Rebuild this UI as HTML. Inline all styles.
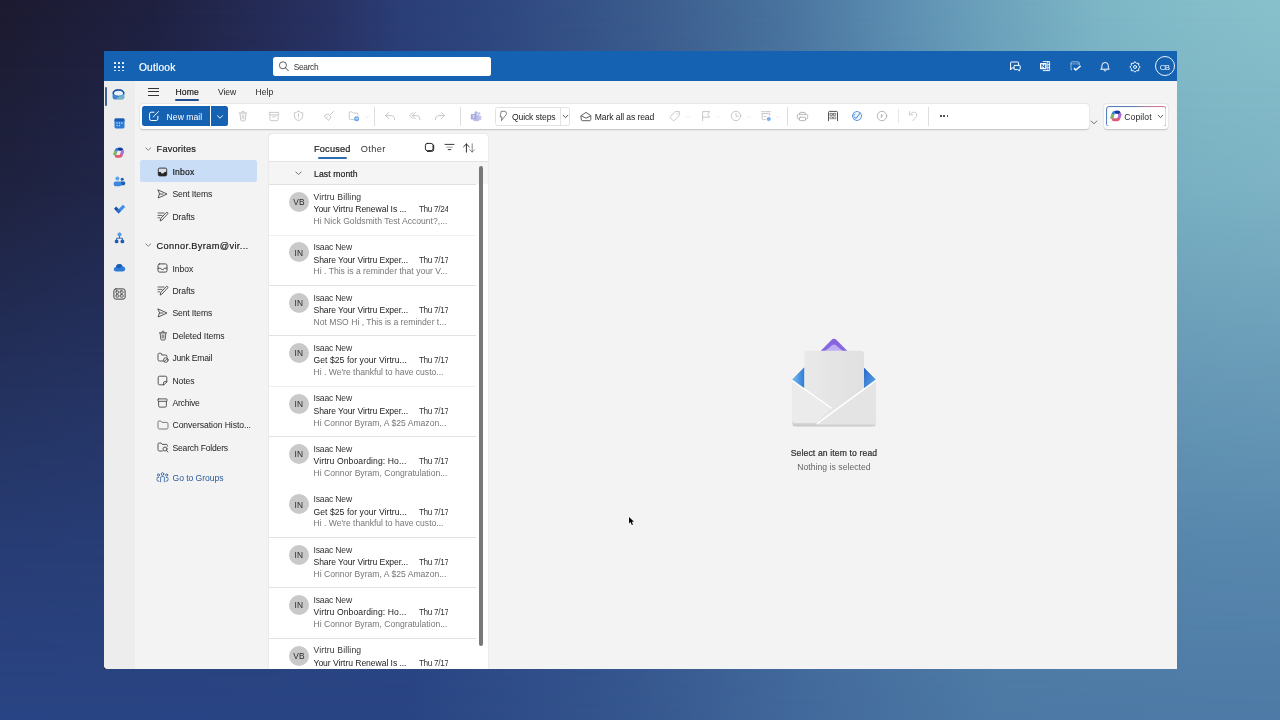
<!DOCTYPE html>
<html><head><meta charset="utf-8"><title>Outlook</title>
<style>
html,body{margin:0;padding:0;}
body{width:1280px;height:720px;overflow:hidden;position:relative;font-family:"Liberation Sans",sans-serif;background:#2a4580;}
.b{position:absolute;box-sizing:border-box;display:block;}
.t{position:absolute;white-space:nowrap;line-height:1;font-family:"Liberation Sans",sans-serif;}

#bg1{left:0;top:0;width:1280px;height:720px;background:linear-gradient(90deg,#2a4585 0%,#2a4584 32%,#34558e 48%,#42699b 62%,#4c79a5 78%,#4d7aa6 100%);}
#bg2{left:0;top:0;width:1280px;height:720px;background:linear-gradient(90deg,#1c1a2f 0%,#1f2040 12%,#283263 26%,#2b3d75 31%,#2e467e 38%,#3a5a8c 50%,#4a759f 62%,#5c8eb1 70%,#6ea4bc 78%,#7db6c6 86%,#85bec9 94%,#88c0cb 100%);-webkit-mask-image:linear-gradient(180deg,#000 0%,rgba(0,0,0,.82) 25%,rgba(0,0,0,.5) 50%,rgba(0,0,0,.2) 75%,rgba(0,0,0,0) 100%);mask-image:linear-gradient(180deg,#000 0%,rgba(0,0,0,.82) 25%,rgba(0,0,0,.5) 50%,rgba(0,0,0,.2) 75%,rgba(0,0,0,0) 100%);}
#win{left:104px;top:51px;width:1073px;height:617.5px;background:#f3f3f3;overflow:hidden;border-radius:0 0 0 4px;}

</style></head><body>
<div class="b" id="bg1"></div><div class="b" id="bg2"></div>
<div class="b" style="left:104px;top:662px;width:6px;height:6.5px;background:#15162a;"></div>
<div class="b" id="win">
<div class="b" style="left:-104px;top:-51px;width:1280px;height:720px;will-change:transform;">
<div class="b" style="left:104px;top:51px;width:1073px;height:30px;background:#1561b2;"></div>
<div class="b" style="left:114.2px;top:62.0px;width:1.7px;height:1.7px;background:#fff;border-radius:.4px;"></div>
<div class="b" style="left:114.2px;top:65.9px;width:1.7px;height:1.7px;background:#fff;border-radius:.4px;"></div>
<div class="b" style="left:114.2px;top:69.8px;width:1.7px;height:1.7px;background:#fff;border-radius:.4px;"></div>
<div class="b" style="left:118.10000000000001px;top:62.0px;width:1.7px;height:1.7px;background:#fff;border-radius:.4px;"></div>
<div class="b" style="left:118.10000000000001px;top:65.9px;width:1.7px;height:1.7px;background:#fff;border-radius:.4px;"></div>
<div class="b" style="left:118.10000000000001px;top:69.8px;width:1.7px;height:1.7px;background:#fff;border-radius:.4px;"></div>
<div class="b" style="left:122.0px;top:62.0px;width:1.7px;height:1.7px;background:#fff;border-radius:.4px;"></div>
<div class="b" style="left:122.0px;top:65.9px;width:1.7px;height:1.7px;background:#fff;border-radius:.4px;"></div>
<div class="b" style="left:122.0px;top:69.8px;width:1.7px;height:1.7px;background:#fff;border-radius:.4px;"></div>
<div class="t" style="left:139.00px;top:63px;font-size:10.2px;color:#fff;letter-spacing:0.192px;-webkit-text-stroke:0.2px #fff;">Outlook</div>
<div class="b" style="left:273px;top:57px;width:218px;height:19px;background:#fff;border-radius:2.5px;"></div>
<svg class="b" style="left:278px;top:60px;" width="12" height="12" viewBox="0 0 20 20"><circle cx="8.2" cy="8.8" r="5.9" fill="none" stroke="#3a3a3a" stroke-width="1.35"/><path d="M12.6 13.2 L17.4 18" stroke="#3a3a3a" stroke-width="1.5" stroke-linecap="round"/></svg>
<div class="t" style="left:293.80px;top:63px;font-size:8.4px;color:#333;letter-spacing:-0.353px;">Search</div>
<div class="b" style="left:104px;top:81px;width:1073px;height:23px;background:#f3f3f3;"></div>
<div class="b" style="left:104px;top:81px;width:30.5px;height:590px;background:#ededed;"></div>
<div class="b" style="left:105px;top:86.5px;width:2px;height:19px;background:#3e5f8f;border-radius:1px;"></div>
<div class="b" style="left:148px;top:88.0px;width:10.5px;height:1px;background:#333;"></div>
<div class="b" style="left:148px;top:91.4px;width:10.5px;height:1px;background:#333;"></div>
<div class="b" style="left:148px;top:94.8px;width:10.5px;height:1px;background:#333;"></div>
<div class="t" style="left:175.40px;top:88px;font-size:8.6px;color:#1b1b1b;letter-spacing:0.140px;-webkit-text-stroke:0.2px #1b1b1b;">Home</div>
<div class="b" style="left:175.4px;top:98.9px;width:23.5px;height:2px;background:#1f4e8f;border-radius:1px;"></div>
<div class="t" style="left:217.90px;top:88px;font-size:8.6px;color:#2a2a2a;letter-spacing:-0.071px;">View</div>
<div class="t" style="left:255.60px;top:88px;font-size:8.6px;color:#2a2a2a;letter-spacing:0.003px;">Help</div>
<div class="b" style="left:139.8px;top:104.2px;width:949px;height:24.8px;background:#fff;border-radius:3px;box-shadow:0 0.6px 1.6px rgba(0,0,0,.22);"></div>
<div class="b" style="left:142px;top:106px;width:67.7px;height:20px;background:#1561b2;border-radius:2.5px 0 0 2.5px;"></div>
<div class="b" style="left:211.3px;top:106px;width:16.8px;height:20px;background:#1561b2;border-radius:0 2.5px 2.5px 0;"></div>
<div class="t" style="left:166.60px;top:113px;font-size:8.6px;color:#fff;letter-spacing:0.030px;">New mail</div>
<div class="b" style="left:1104px;top:104.2px;width:63.8px;height:24.8px;background:#fff;border-radius:3px;box-shadow:0 0.6px 1.6px rgba(0,0,0,.22);"></div>
<div class="t" style="left:1124.20px;top:113px;font-size:8.6px;color:#2a2a2a;letter-spacing:0.118px;">Copilot</div>
<div class="t" style="left:511.90px;top:113px;font-size:8.6px;color:#1c1c1c;letter-spacing:-0.112px;">Quick steps</div>
<div class="t" style="left:594.80px;top:113px;font-size:8.6px;color:#1c1c1c;letter-spacing:-0.111px;">Mark all as read</div>
<div class="b" style="left:494.7px;top:106.7px;width:75.4px;height:18.9px;border:0.8px solid #e2e2e2;border-radius:2.5px;"></div>
<div class="b" style="left:560.1px;top:106.7px;width:0.8px;height:18.9px;background:#e2e2e2;"></div>
<div class="b" style="left:373.90000000000003px;top:107px;width:0.9px;height:18.8px;background:#dedede;"></div>
<div class="b" style="left:460.1px;top:107px;width:0.9px;height:18.8px;background:#dedede;"></div>
<div class="b" style="left:787.0px;top:107px;width:0.9px;height:18.8px;background:#dedede;"></div>
<div class="b" style="left:928.0px;top:107px;width:0.9px;height:18.8px;background:#dedede;"></div>
<div class="b" style="left:897.8px;top:109px;width:0.8px;height:14px;background:#e6e6e6;"></div>
<div class="t" style="left:156.60px;top:145px;font-size:9.2px;color:#222;letter-spacing:0.196px;-webkit-text-stroke:0.2px #222;">Favorites</div>
<div class="b" style="left:140.2px;top:160.1px;width:116.8px;height:21.9px;background:#c9def6;border-radius:2.5px;"></div>
<div class="t" style="left:172.50px;top:168px;font-size:8.6px;color:#1a1a1a;letter-spacing:0.192px;-webkit-text-stroke:0.2px #1a1a1a;">Inbox</div>
<div class="t" style="left:172.50px;top:190px;font-size:8.6px;color:#232323;letter-spacing:-0.151px;">Sent Items</div>
<div class="t" style="left:172.50px;top:213px;font-size:8.6px;color:#232323;letter-spacing:-0.123px;">Drafts</div>
<div class="t" style="left:156.60px;top:242px;font-size:9.2px;color:#222;letter-spacing:0.368px;-webkit-text-stroke:0.2px #222;">Connor.Byram@vir...</div>
<div class="t" style="left:172.50px;top:265px;font-size:8.6px;color:#232323;letter-spacing:-0.048px;">Inbox</div>
<div class="t" style="left:172.50px;top:287px;font-size:8.6px;color:#232323;letter-spacing:-0.123px;">Drafts</div>
<div class="t" style="left:172.50px;top:309px;font-size:8.6px;color:#232323;letter-spacing:-0.151px;">Sent Items</div>
<div class="t" style="left:172.50px;top:332px;font-size:8.6px;color:#232323;letter-spacing:-0.081px;">Deleted Items</div>
<div class="t" style="left:172.50px;top:354px;font-size:8.6px;color:#232323;letter-spacing:-0.246px;">Junk Email</div>
<div class="t" style="left:172.50px;top:377px;font-size:8.6px;color:#232323;letter-spacing:-0.093px;">Notes</div>
<div class="t" style="left:172.50px;top:399px;font-size:8.6px;color:#232323;letter-spacing:-0.240px;">Archive</div>
<div class="t" style="left:172.50px;top:421px;font-size:8.6px;color:#232323;letter-spacing:-0.063px;">Conversation Histo...</div>
<div class="t" style="left:172.50px;top:444px;font-size:8.6px;color:#232323;letter-spacing:-0.201px;">Search Folders</div>
<div class="t" style="left:172.50px;top:474px;font-size:8.6px;color:#2a5a9a;letter-spacing:-0.052px;">Go to Groups</div>
<div class="b" style="left:268.5px;top:134px;width:219px;height:540px;background:#fff;border-radius:3.5px 3.5px 0 0;box-shadow:0 0 1.5px rgba(0,0,0,.18);"></div>
<div class="t" style="left:314.00px;top:145px;font-size:9.2px;color:#222;letter-spacing:0.188px;-webkit-text-stroke:0.2px #222;">Focused</div>
<div class="b" style="left:317.5px;top:156.9px;width:29.5px;height:1.8px;background:#2d6cb5;border-radius:1px;"></div>
<div class="t" style="left:360.70px;top:145px;font-size:9.2px;color:#333;letter-spacing:0.398px;">Other</div>
<div class="b" style="left:268.5px;top:161px;width:219px;height:0.9px;background:#e3e3e3;"></div>
<div class="b" style="left:268.5px;top:161.9px;width:219px;height:22.4px;background:#f5f5f5;"></div>
<div class="b" style="left:269px;top:184.2px;width:207px;height:0.8px;background:#e0e0e0;"></div>
<div class="t" style="left:314.00px;top:170px;font-size:8.6px;color:#222;letter-spacing:0.125px;-webkit-text-stroke:0.2px #222;">Last month</div>
<div class="b" style="left:479.3px;top:166px;width:3.5px;height:480px;background:#787878;border-radius:2px;"></div>
<div class="b" style="left:0;top:0;width:447.8px;height:720px;overflow:hidden;">
<div class="b" style="left:289px;top:192.0px;width:20px;height:20px;background:#c9c9c9;border-radius:50%;"></div>
<div class="t" style="left:293.20px;top:198px;font-size:8.4px;color:#2a2a2a;letter-spacing:0.197px;">VB</div>
<div class="t" style="left:313.50px;top:193px;font-size:8.6px;color:#333;letter-spacing:0.148px;">Virtru Billing</div>
<div class="t" style="left:313.50px;top:205px;font-size:8.6px;color:#222;letter-spacing:-0.063px;">Your Virtru Renewal Is ...</div>
<div class="t" style="left:418.90px;top:206px;font-size:8.2px;color:#333;letter-spacing:-0.296px;">Thu 7/24</div>
<div class="t" style="left:313.50px;top:217px;font-size:8.6px;color:#777;letter-spacing:0.009px;">Hi Nick Goldsmith Test Account?,...</div>
<div class="b" style="left:289px;top:242.4px;width:20px;height:20px;background:#c9c9c9;border-radius:50%;"></div>
<div class="t" style="left:294.40px;top:249px;font-size:8.4px;color:#2a2a2a;letter-spacing:0.400px;">IN</div>
<div class="t" style="left:313.50px;top:243px;font-size:8.6px;color:#333;letter-spacing:-0.183px;">Isaac New</div>
<div class="t" style="left:313.50px;top:256px;font-size:8.6px;color:#222;letter-spacing:-0.092px;">Share Your Virtru Exper...</div>
<div class="t" style="left:418.90px;top:257px;font-size:8.2px;color:#333;letter-spacing:-0.296px;">Thu 7/17</div>
<div class="t" style="left:313.50px;top:267px;font-size:8.6px;color:#777;letter-spacing:0.004px;">Hi . This is a reminder that your V...</div>
<div class="b" style="left:289px;top:292.8px;width:20px;height:20px;background:#c9c9c9;border-radius:50%;"></div>
<div class="t" style="left:294.40px;top:299px;font-size:8.4px;color:#2a2a2a;letter-spacing:0.400px;">IN</div>
<div class="t" style="left:313.50px;top:294px;font-size:8.6px;color:#333;letter-spacing:-0.183px;">Isaac New</div>
<div class="t" style="left:313.50px;top:306px;font-size:8.6px;color:#222;letter-spacing:-0.092px;">Share Your Virtru Exper...</div>
<div class="t" style="left:418.90px;top:307px;font-size:8.2px;color:#333;letter-spacing:-0.296px;">Thu 7/17</div>
<div class="t" style="left:313.50px;top:318px;font-size:8.6px;color:#777;letter-spacing:-0.005px;">Not MSO Hi , This is a reminder t...</div>
<div class="b" style="left:289px;top:343.2px;width:20px;height:20px;background:#c9c9c9;border-radius:50%;"></div>
<div class="t" style="left:294.40px;top:349px;font-size:8.4px;color:#2a2a2a;letter-spacing:0.400px;">IN</div>
<div class="t" style="left:313.50px;top:344px;font-size:8.6px;color:#333;letter-spacing:-0.183px;">Isaac New</div>
<div class="t" style="left:313.50px;top:356px;font-size:8.6px;color:#222;letter-spacing:0.054px;">Get $25 for your Virtru...</div>
<div class="t" style="left:418.90px;top:357px;font-size:8.2px;color:#333;letter-spacing:-0.296px;">Thu 7/17</div>
<div class="t" style="left:313.50px;top:368px;font-size:8.6px;color:#777;letter-spacing:-0.015px;">Hi . We're thankful to have custo...</div>
<div class="b" style="left:289px;top:393.6px;width:20px;height:20px;background:#c9c9c9;border-radius:50%;"></div>
<div class="t" style="left:294.40px;top:400px;font-size:8.4px;color:#2a2a2a;letter-spacing:0.400px;">IN</div>
<div class="t" style="left:313.50px;top:394px;font-size:8.6px;color:#333;letter-spacing:-0.183px;">Isaac New</div>
<div class="t" style="left:313.50px;top:407px;font-size:8.6px;color:#222;letter-spacing:-0.092px;">Share Your Virtru Exper...</div>
<div class="t" style="left:418.90px;top:408px;font-size:8.2px;color:#333;letter-spacing:-0.296px;">Thu 7/17</div>
<div class="t" style="left:313.50px;top:419px;font-size:8.6px;color:#777;letter-spacing:0.003px;">Hi Connor Byram, A $25 Amazon...</div>
<div class="b" style="left:289px;top:444.0px;width:20px;height:20px;background:#c9c9c9;border-radius:50%;"></div>
<div class="t" style="left:294.40px;top:450px;font-size:8.4px;color:#2a2a2a;letter-spacing:0.400px;">IN</div>
<div class="t" style="left:313.50px;top:445px;font-size:8.6px;color:#333;letter-spacing:-0.183px;">Isaac New</div>
<div class="t" style="left:313.50px;top:457px;font-size:8.6px;color:#222;letter-spacing:0.097px;">Virtru Onboarding: Ho...</div>
<div class="t" style="left:418.90px;top:458px;font-size:8.2px;color:#333;letter-spacing:-0.296px;">Thu 7/17</div>
<div class="t" style="left:313.50px;top:469px;font-size:8.6px;color:#777;letter-spacing:0.005px;">Hi Connor Byram, Congratulation...</div>
<div class="b" style="left:289px;top:494.4px;width:20px;height:20px;background:#c9c9c9;border-radius:50%;"></div>
<div class="t" style="left:294.40px;top:501px;font-size:8.4px;color:#2a2a2a;letter-spacing:0.400px;">IN</div>
<div class="t" style="left:313.50px;top:495px;font-size:8.6px;color:#333;letter-spacing:-0.183px;">Isaac New</div>
<div class="t" style="left:313.50px;top:508px;font-size:8.6px;color:#222;letter-spacing:0.054px;">Get $25 for your Virtru...</div>
<div class="t" style="left:418.90px;top:509px;font-size:8.2px;color:#333;letter-spacing:-0.296px;">Thu 7/17</div>
<div class="t" style="left:313.50px;top:519px;font-size:8.6px;color:#777;letter-spacing:-0.015px;">Hi . We're thankful to have custo...</div>
<div class="b" style="left:289px;top:544.8px;width:20px;height:20px;background:#c9c9c9;border-radius:50%;"></div>
<div class="t" style="left:294.40px;top:551px;font-size:8.4px;color:#2a2a2a;letter-spacing:0.400px;">IN</div>
<div class="t" style="left:313.50px;top:546px;font-size:8.6px;color:#333;letter-spacing:-0.183px;">Isaac New</div>
<div class="t" style="left:313.50px;top:558px;font-size:8.6px;color:#222;letter-spacing:-0.092px;">Share Your Virtru Exper...</div>
<div class="t" style="left:418.90px;top:559px;font-size:8.2px;color:#333;letter-spacing:-0.296px;">Thu 7/17</div>
<div class="t" style="left:313.50px;top:570px;font-size:8.6px;color:#777;letter-spacing:0.003px;">Hi Connor Byram, A $25 Amazon...</div>
<div class="b" style="left:289px;top:595.2px;width:20px;height:20px;background:#c9c9c9;border-radius:50%;"></div>
<div class="t" style="left:294.40px;top:601px;font-size:8.4px;color:#2a2a2a;letter-spacing:0.400px;">IN</div>
<div class="t" style="left:313.50px;top:596px;font-size:8.6px;color:#333;letter-spacing:-0.183px;">Isaac New</div>
<div class="t" style="left:313.50px;top:608px;font-size:8.6px;color:#222;letter-spacing:0.097px;">Virtru Onboarding: Ho...</div>
<div class="t" style="left:418.90px;top:609px;font-size:8.2px;color:#333;letter-spacing:-0.296px;">Thu 7/17</div>
<div class="t" style="left:313.50px;top:620px;font-size:8.6px;color:#777;letter-spacing:0.005px;">Hi Connor Byram, Congratulation...</div>
<div class="b" style="left:289px;top:645.5999999999999px;width:20px;height:20px;background:#c9c9c9;border-radius:50%;"></div>
<div class="t" style="left:293.20px;top:652px;font-size:8.4px;color:#2a2a2a;letter-spacing:0.197px;">VB</div>
<div class="t" style="left:313.50px;top:646px;font-size:8.6px;color:#333;letter-spacing:0.148px;">Virtru Billing</div>
<div class="t" style="left:313.50px;top:659px;font-size:8.6px;color:#222;letter-spacing:-0.063px;">Your Virtru Renewal Is ...</div>
<div class="t" style="left:418.90px;top:660px;font-size:8.2px;color:#333;letter-spacing:-0.296px;">Thu 7/17</div>
<div class="t" style="left:313.50px;top:670px;font-size:8.6px;color:#777;letter-spacing:0.009px;">Hi Nick Goldsmith Test Account?,...</div>
</div>
<div class="b" style="left:269px;top:234.5px;width:207px;height:0.8px;background:#f0f0f0;"></div>
<div class="b" style="left:269px;top:284.90000000000003px;width:207px;height:0.8px;background:#e2e2e2;"></div>
<div class="b" style="left:269px;top:335.3px;width:207px;height:0.8px;background:#e2e2e2;"></div>
<div class="b" style="left:269px;top:385.70000000000005px;width:207px;height:0.8px;background:#f0f0f0;"></div>
<div class="b" style="left:269px;top:436.1px;width:207px;height:0.8px;background:#e2e2e2;"></div>
<div class="b" style="left:269px;top:536.9px;width:207px;height:0.8px;background:#e2e2e2;"></div>
<div class="b" style="left:269px;top:587.3000000000001px;width:207px;height:0.8px;background:#e2e2e2;"></div>
<div class="b" style="left:269px;top:637.6999999999999px;width:207px;height:0.8px;background:#e2e2e2;"></div>
<div class="t" style="left:790.70px;top:449px;font-size:8.6px;color:#2e2e2e;letter-spacing:0.134px;-webkit-text-stroke:0.2px #2e2e2e;">Select an item to read</div>
<div class="t" style="left:797.30px;top:463px;font-size:8.6px;color:#666;letter-spacing:0.039px;">Nothing is selected</div>
<svg class="b" style="left:1009px;top:60px;" width="12" height="12" viewBox="0 0 12 12"><path d="M5 8 H2.4 L1.6 10 L1.6 2.6 Q1.6 2 2.2 2 H9 Q9.6 2 9.6 2.6 V4.6" fill="none" stroke="#fff" stroke-width="1.0" stroke-linecap="round" stroke-linejoin="round" /><path d="M5.6 5.4 H10.6 Q11.2 5.4 11.2 6 V9 Q11.2 9.6 10.6 9.6 H10.4 L10.4 11 L8.8 9.6 H5.6 Q5 9.6 5 9 V6 Q5 5.4 5.6 5.4 Z" fill="none" stroke="#fff" stroke-width="1.0" stroke-linecap="round" stroke-linejoin="round" /></svg>
<svg class="b" style="left:1039px;top:60px;" width="12" height="12" viewBox="0 0 12 12"><path d="M4.2 1.6 H10.6 V10.6 H4.2" fill="none" stroke="#fff" stroke-width="0.9" stroke-linecap="round" stroke-linejoin="round" /><path d="M8.8 1.6 V10.6 M8.8 4.6 H10.6 M8.8 7.6 H10.6" fill="none" stroke="#fff" stroke-width="0.8" stroke-linecap="round" stroke-linejoin="round" /><rect x="1" y="3" width="6.6" height="6.2" rx="0.6" fill="#fff"/><path d="M2.9 7.8 V4.4 L5.7 7.8 V4.4" fill="none" stroke="#1561b2" stroke-width="1.0" stroke-linejoin="miter"/></svg>
<svg class="b" style="left:1069px;top:60px;" width="13" height="12" viewBox="0 0 13 12"><path d="M2 8.8 V3 Q2 1.8 3.2 1.8 H9 Q10.2 1.8 10.2 3 V5" fill="none" stroke="rgba(255,255,255,.62)" stroke-width="0.9" stroke-linecap="round" stroke-linejoin="round" /><path d="M2 3.9 H10.2" fill="none" stroke="rgba(255,255,255,.5)" stroke-width="0.8" stroke-linecap="round" stroke-linejoin="round" /><path d="M2 9.4 Q2 10 2.6 10" fill="none" stroke="rgba(255,255,255,.7)" stroke-width="0.9" stroke-linecap="round" stroke-linejoin="round" /><path d="M5.4 8.6 L6.8 10 L11.2 6.2" fill="none" stroke="#fff" stroke-width="1.5" stroke-linecap="round" stroke-linejoin="round" /></svg>
<svg class="b" style="left:1099px;top:60.5px;" width="12" height="12" viewBox="0 0 12 12"><path d="M2 8.2 H10.2 L9.3 6.7 V4.6 Q9.3 1.5 6.1 1.5 Q2.9 1.5 2.9 4.6 V6.7 Z" fill="none" stroke="#fff" stroke-width="1.0" stroke-linecap="round" stroke-linejoin="round" /><path d="M4.9 9.4 Q6.1 11.2 7.3 9.4" fill="none" stroke="#fff" stroke-width="0.9" stroke-linecap="round" stroke-linejoin="round" /></svg>
<svg class="b" style="left:1129px;top:60.7px;" width="12" height="12" viewBox="0 0 12 12"><path d="M6.00 0.80 L7.53 2.30 L9.68 2.32 L9.70 4.47 L11.20 6.00 L9.70 7.53 L9.68 9.68 L7.53 9.70 L6.00 11.20 L4.47 9.70 L2.32 9.68 L2.30 7.53 L0.80 6.00 L2.30 4.47 L2.32 2.32 L4.47 2.30 Z" fill="none" stroke="#fff" stroke-width="0.95" stroke-linecap="round" stroke-linejoin="round" /><circle cx="6" cy="6" r="1.5" fill="none" stroke="#fff" stroke-width="0.9" stroke-linecap="round" stroke-linejoin="round" /></svg>
<div class="b" style="left:1154.5px;top:56.4px;width:20.1px;height:20.1px;border:0.9px solid rgba(255,255,255,.92);border-radius:50%;"></div>
<div class="t" style="left:1159.80px;top:64px;font-size:7.9px;color:#fff;letter-spacing:-0.687px;">CB</div>
<svg class="b" style="left:148.0px;top:110.0px;" width="12" height="12" viewBox="0 0 12 12"><path d="M6 2.2 H3.2 Q1.6 2.2 1.6 3.8 V8.9 Q1.6 10.5 3.2 10.5 H8.3 Q9.9 10.5 9.9 8.9 V6.2" fill="none" stroke="#fff" stroke-width="1.0" stroke-linecap="round" stroke-linejoin="round" /><path d="M5.2 7 L10.6 1.5" fill="none" stroke="#fff" stroke-width="1.0" stroke-linecap="round" stroke-linejoin="round" /></svg>
<svg class="b" style="left:215.7px;top:113.6px;" width="8" height="6" viewBox="0 0 8 6"><path d="M1.5 1.7 L4 4.2 L6.5 1.7" fill="none" stroke="#fff" stroke-width="0.95" stroke-linecap="round" stroke-linejoin="round" /></svg>
<svg class="b" style="left:238.3px;top:109.9px;" width="10" height="12" viewBox="0 0 10 12"><path d="M1.2 3 H8.8 M3.7 3 Q3.7 1.2 5 1.2 Q6.3 1.2 6.3 3" fill="none" stroke="#c2c2c2" stroke-width="0.9" stroke-linecap="round" stroke-linejoin="round" /><path d="M2 3.2 L2.7 10 Q2.8 10.9 3.7 10.9 H6.3 Q7.2 10.9 7.3 10 L8 3.2" fill="none" stroke="#c2c2c2" stroke-width="0.9" stroke-linecap="round" stroke-linejoin="round" /><path d="M4.2 5 V8.8 M5.8 5 V8.8" fill="none" stroke="#c2c2c2" stroke-width="0.8" stroke-linecap="round" stroke-linejoin="round" /></svg>
<svg class="b" style="left:268.0px;top:110.7px;" width="12" height="11" viewBox="0 0 12 11"><rect x="1.3" y="1.4" width="9.4" height="2.5" rx="0.6" fill="none" stroke="#c2c2c2" stroke-width="0.9" stroke-linecap="round" stroke-linejoin="round" /><path d="M2 4 V8.6 Q2 9.7 3.1 9.7 H8.9 Q10 9.7 10 8.6 V4" fill="none" stroke="#c2c2c2" stroke-width="0.9" stroke-linecap="round" stroke-linejoin="round" /><path d="M4.8 5.8 H7.2" fill="none" stroke="#c2c2c2" stroke-width="0.9" stroke-linecap="round" stroke-linejoin="round" /></svg>
<svg class="b" style="left:293.1px;top:110.0px;" width="11" height="12" viewBox="0 0 11 12"><path d="M5.5 1.2 Q7.4 2.7 9.7 2.9 V6 Q9.7 9.4 5.5 10.9 Q1.3 9.4 1.3 6 V2.9 Q3.6 2.7 5.5 1.2 Z" fill="none" stroke="#c2c2c2" stroke-width="0.9" stroke-linecap="round" stroke-linejoin="round" /><path d="M5.5 4 V6.8" fill="none" stroke="#c2c2c2" stroke-width="0.9" stroke-linecap="round" stroke-linejoin="round" /><circle cx="5.5" cy="8.3" r="0.5" fill="#c2c2c2"/></svg>
<svg class="b" style="left:323.0px;top:110.0px;" width="12" height="12" viewBox="0 0 12 12"><path d="M10.6 1.4 L6.9 5.1" fill="none" stroke="#c2c2c2" stroke-width="0.9" stroke-linecap="round" stroke-linejoin="round" /><path d="M5.3 4.2 L8 6.9 L5.6 10.4 L1.4 6.3 Z" fill="none" stroke="#c2c2c2" stroke-width="0.9" stroke-linecap="round" stroke-linejoin="round" /><path d="M3.4 8.3 L4.6 7.1" fill="none" stroke="#c2c2c2" stroke-width="0.7" stroke-linecap="round" stroke-linejoin="round" /></svg>
<svg class="b" style="left:348.2px;top:110.2px;" width="12" height="12" viewBox="0 0 12 12"><path d="M5.6 9.6 H2.4 Q1.2 9.6 1.2 8.4 V3 Q1.2 1.9 2.3 1.9 H4.2 L5.4 3.1 H9 Q10.1 3.1 10.1 4.2 V5.4" fill="none" stroke="#c2c2c2" stroke-width="0.9" stroke-linecap="round" stroke-linejoin="round" /><circle cx="8.6" cy="8.7" r="2.5" fill="#6aa5ec"/><path d="M7.3 8.7 H9.7 M8.8 7.7 L9.8 8.7 L8.8 9.7" fill="none" stroke="#e8f1fc" stroke-width="0.6" stroke-linecap="round" stroke-linejoin="round" /></svg>
<svg class="b" style="left:363.8px;top:114.8px;" width="6" height="4" viewBox="0 0 6 4"><path d="M1.2 1 L3 2.8 L4.8 1" fill="none" stroke="#e0e0e0" stroke-width="0.75" stroke-linecap="round" stroke-linejoin="round" /></svg>
<svg class="b" style="left:384.0px;top:111.0px;" width="12" height="10" viewBox="0 0 12 10"><path d="M4.6 1.6 L1.5 4.6 L4.6 7.6 M1.7 4.6 H6.8 Q10.6 4.6 10.6 8.6" fill="none" stroke="#c2c2c2" stroke-width="0.9" stroke-linecap="round" stroke-linejoin="round" /></svg>
<svg class="b" style="left:409.0px;top:111.0px;" width="12" height="10" viewBox="0 0 12 10"><path d="M3.9 1.6 L0.9 4.6 L3.9 7.6 M6.4 1.6 L3.4 4.6 L6.4 7.6 M3.6 4.6 H7.6 Q10.9 4.6 10.9 8.6" fill="none" stroke="#c2c2c2" stroke-width="0.9" stroke-linecap="round" stroke-linejoin="round" /></svg>
<svg class="b" style="left:434.0px;top:111.0px;" width="12" height="10" viewBox="0 0 12 10"><path d="M7.4 1.6 L10.5 4.6 L7.4 7.6 M10.3 4.6 H5.2 Q1.4 4.6 1.4 8.6" fill="none" stroke="#c2c2c2" stroke-width="0.9" stroke-linecap="round" stroke-linejoin="round" /></svg>
<svg class="b" style="left:470.3px;top:110.5px;" width="12" height="11" viewBox="0 0 12 11"><g opacity=".78"><circle cx="9" cy="2.6" r="1.4" fill="#b7b9e6"/><rect x="7" y="4.4" width="4.4" height="4.8" rx="1.2" fill="#b7b9e6"/><circle cx="6" cy="2" r="1.7" fill="#9da1dc"/><rect x="3.4" y="4" width="5.6" height="6.2" rx="1.3" fill="#a9acdf"/><rect x="0.8" y="3" width="5.6" height="5.6" rx="0.8" fill="#8e93d6"/><path d="M2.4 4.7 H4.8 M3.6 4.7 V7.3" stroke="#eef" stroke-width="0.7" fill="none"/></g></svg>
<svg class="b" style="left:499.0px;top:110.0px;" width="9" height="12" viewBox="0 0 9 12"><path d="M2.6 1.3 H5.9 Q7.4 1.6 7.4 3.3 L7.2 4.6 L2.4 10.7 L3 6.9 H1.5 Z" fill="none" stroke="#6a6a6a" stroke-width="0.85" stroke-linecap="round" stroke-linejoin="round" /></svg>
<svg class="b" style="left:561.9px;top:114.2px;" width="7" height="5" viewBox="0 0 7 5"><path d="M1.1 1.2 L3.5 3.6 L5.9 1.2" fill="none" stroke="#3a3a3a" stroke-width="0.85" stroke-linecap="round" stroke-linejoin="round" /></svg>
<svg class="b" style="left:579.7px;top:110.5px;" width="12" height="11" viewBox="0 0 12 11"><path d="M1.2 4.6 L6 1.4 L10.8 4.6 V8.4 Q10.8 9.7 9.5 9.7 H2.5 Q1.2 9.7 1.2 8.4 Z" fill="none" stroke="#4e4e4e" stroke-width="0.9" stroke-linecap="round" stroke-linejoin="round" /><path d="M1.5 4.9 L6 7.2 L10.5 4.9" fill="none" stroke="#4e4e4e" stroke-width="0.9" stroke-linecap="round" stroke-linejoin="round" /></svg>
<svg class="b" style="left:669.0px;top:110.0px;" width="12" height="12" viewBox="0 0 12 12"><path d="M6.4 1.6 H10.3 V5.5 L5.3 10.5 Q4.6 11.1 3.9 10.5 L1.4 8 Q0.8 7.3 1.4 6.6 Z" fill="none" stroke="#c2c2c2" stroke-width="0.9" stroke-linecap="round" stroke-linejoin="round" /><circle cx="8.2" cy="3.8" r="0.55" fill="#c2c2c2"/></svg>
<svg class="b" style="left:684.5px;top:115.0px;" width="6" height="4" viewBox="0 0 6 4"><path d="M1.2 1 L3 2.8 L4.8 1" fill="none" stroke="#e4e4e4" stroke-width="0.75" stroke-linecap="round" stroke-linejoin="round" /></svg>
<svg class="b" style="left:700.5px;top:110.0px;" width="10" height="12" viewBox="0 0 10 12"><path d="M1.6 10.8 V1.6 H8.6 L6.6 4.4 L8.6 7.2 H1.6" fill="none" stroke="#c2c2c2" stroke-width="0.9" stroke-linecap="round" stroke-linejoin="round" /></svg>
<svg class="b" style="left:716.4px;top:115.0px;" width="6" height="4" viewBox="0 0 6 4"><path d="M1.2 1 L3 2.8 L4.8 1" fill="none" stroke="#ededed" stroke-width="0.75" stroke-linecap="round" stroke-linejoin="round" /></svg>
<svg class="b" style="left:730.0px;top:110.0px;" width="12" height="12" viewBox="0 0 12 12"><circle cx="6" cy="6" r="4.7" fill="none" stroke="#c2c2c2" stroke-width="0.9" stroke-linecap="round" stroke-linejoin="round" /><path d="M6 3.4 V6.3 H8.2" fill="none" stroke="#c2c2c2" stroke-width="0.9" stroke-linecap="round" stroke-linejoin="round" /></svg>
<svg class="b" style="left:746.0px;top:115.0px;" width="6" height="4" viewBox="0 0 6 4"><path d="M1.2 1 L3 2.8 L4.8 1" fill="none" stroke="#e4e4e4" stroke-width="0.75" stroke-linecap="round" stroke-linejoin="round" /></svg>
<svg class="b" style="left:760.2px;top:110.2px;" width="12" height="12" viewBox="0 0 12 12"><path d="M1.4 1.7 H10.4 M2.2 3.6 H9.6 V5.4 M2.2 3.6 V8.6 Q2.2 9.6 3.2 9.6 H5.4" fill="none" stroke="#c2c2c2" stroke-width="0.9" stroke-linecap="round" stroke-linejoin="round" /><circle cx="8.8" cy="9" r="2.1" fill="#7fb0ec"/><path d="M4 6.4 H6" fill="none" stroke="#c2c2c2" stroke-width="0.8" stroke-linecap="round" stroke-linejoin="round" /></svg>
<svg class="b" style="left:775.0px;top:115.0px;" width="6" height="4" viewBox="0 0 6 4"><path d="M1.2 1 L3 2.8 L4.8 1" fill="none" stroke="#e4e4e4" stroke-width="0.75" stroke-linecap="round" stroke-linejoin="round" /></svg>
<svg class="b" style="left:795.8px;top:110.7px;" width="13" height="11" viewBox="0 0 13 11"><path d="M3.6 3.2 V2.2 Q3.6 1.4 4.4 1.4 H8.6 Q9.4 1.4 9.4 2.2 V3.2" fill="none" stroke="#b0b0b0" stroke-width="0.9" stroke-linecap="round" stroke-linejoin="round" /><path d="M3.4 8 H2.6 Q1.3 8 1.3 6.7 V4.7 Q1.3 3.3 2.7 3.3 H10.3 Q11.7 3.3 11.7 4.7 V6.7 Q11.7 8 10.4 8 H9.6" fill="none" stroke="#b0b0b0" stroke-width="0.9" stroke-linecap="round" stroke-linejoin="round" /><rect x="3.5" y="6.2" width="6" height="3.4" rx="0.6" fill="none" stroke="#b0b0b0" stroke-width="0.9" stroke-linecap="round" stroke-linejoin="round" /></svg>
<svg class="b" style="left:827.0px;top:110.0px;" width="12" height="12" viewBox="0 0 12 12"><path d="M1.5 10.7 V2.4 Q1.5 1.4 2.5 1.4 H9.5 Q10.5 1.4 10.5 2.4 V10.7" fill="none" stroke="#3e3e3e" stroke-width="0.9" stroke-linecap="round" stroke-linejoin="round" /><rect x="3.3" y="3.4" width="2.1" height="1.9" fill="none" stroke="#4a4a4a" stroke-width="0.7" stroke-linecap="round" stroke-linejoin="round" /><rect x="6.6" y="3.4" width="2.1" height="1.9" fill="none" stroke="#4a4a4a" stroke-width="0.7" stroke-linecap="round" stroke-linejoin="round" /><rect x="3.3" y="6.9" width="2.1" height="1.9" fill="none" stroke="#6e6e6e" stroke-width="0.7" stroke-linecap="round" stroke-linejoin="round" /><rect x="6.6" y="6.9" width="2.1" height="1.9" fill="none" stroke="#6e6e6e" stroke-width="0.7" stroke-linecap="round" stroke-linejoin="round" /><path d="M5.4 4.35 H6.6 M5.4 7.85 H6.6" fill="none" stroke="#666" stroke-width="0.6" stroke-linecap="round" stroke-linejoin="round" /></svg>
<svg class="b" style="left:851.1px;top:110.0px;" width="12" height="12" viewBox="0 0 12 12"><path d="M6 1.3 L9.3 2.7 L10.7 6 L9.3 9.3 L6 10.7 L2.7 9.3 L1.3 6 L2.7 2.7 Z" fill="#edf4fd" stroke="#4a8cdf" stroke-width="0.85" stroke-linejoin="round"/><path d="M3.2 6.6 L4.8 8.6 L8.9 3.4" fill="none" stroke="#3f84dc" stroke-width="1.0" stroke-linecap="round" stroke-linejoin="round" /><path d="M1.6 5.6 L4 4.2" fill="none" stroke="#4a8cdf" stroke-width="0.8" stroke-linecap="round" stroke-linejoin="round" /></svg>
<svg class="b" style="left:876.0px;top:110.0px;" width="12" height="12" viewBox="0 0 12 12"><circle cx="6" cy="6" r="4.7" fill="none" stroke="#a6a6a6" stroke-width="0.85" stroke-linecap="round" stroke-linejoin="round" /><path d="M5.3 4.6 V7.6 M5.5 6.6 L7 4.8" fill="none" stroke="#a6a6a6" stroke-width="0.75" stroke-linecap="round" stroke-linejoin="round" /></svg>
<svg class="b" style="left:908.2px;top:110.0px;" width="11" height="12" viewBox="0 0 11 12"><path d="M1.6 1.6 V4.8 H4.8 M1.8 4.6 Q4 1.4 7 2.2 Q9.8 3.4 8.6 6.4 L5 10.6" fill="none" stroke="#c8c8c8" stroke-width="0.9" stroke-linecap="round" stroke-linejoin="round" /></svg>
<div class="b" style="left:940.3px;top:115.4px;width:1.5px;height:1.5px;background:#333;border-radius:50%;"></div>
<div class="b" style="left:943.4px;top:115.4px;width:1.5px;height:1.5px;background:#333;border-radius:50%;"></div>
<div class="b" style="left:946.5px;top:115.4px;width:1.5px;height:1.5px;background:#333;border-radius:50%;"></div>
<svg class="b" style="left:1090.2px;top:119.9px;" width="8" height="5" viewBox="0 0 8 5"><path d="M1.2 1 L4 3.8 L6.8 1" fill="none" stroke="#555" stroke-width="0.85" stroke-linecap="round" stroke-linejoin="round" /></svg>
<svg class="b" style="left:1105.6px;top:105.6px" width="60.8" height="20.8" viewBox="0 0 61.4 21.4" preserveAspectRatio="none"><defs><linearGradient id="cg" x1="0" x2="1" y1="0" y2="0"><stop offset="0" stop-color="#2f5fb0"/><stop offset=".45" stop-color="#3f5f9f"/><stop offset=".7" stop-color="#b8607f"/><stop offset="1" stop-color="#d3546b"/></linearGradient></defs><path d="M0.6 19 V3 Q0.6 0.6 3 0.6 H58.4 Q60.8 0.6 60.8 3 V19" fill="none" stroke="url(#cg)" stroke-width="0.9"/><path d="M0.6 19 Q0.6 20.8 3 20.8 M60.8 19 Q60.8 20.8 58.4 20.8" fill="none" stroke="url(#cg)" stroke-width="0.8" opacity=".8"/></svg>
<svg class="b" style="left:1109.6px;top:110.2px;" width="12" height="12" viewBox="0 0 14 14"><path d="M2.3 8.6 L3.9 3.9 Q4.3 2.7 5.6 2.7 H10" fill="none" stroke="#3b7fe0" stroke-width="3.4" stroke-linejoin="round" stroke-linecap="round"/><path d="M7.4 2.7 H9.6 Q10.4 2.7 10.7 3.6" fill="none" stroke="#1a3a9a" stroke-width="3.4" stroke-linecap="round"/><path d="M2.3 8.6 L3.1 6.2" fill="none" stroke="#86b84a" stroke-width="3.4" stroke-linecap="round"/><path d="M11.7 5.4 L10.1 10.1 Q9.7 11.3 8.4 11.3 H4" fill="none" stroke="#df5a74" stroke-width="3.4" stroke-linejoin="round" stroke-linecap="round"/><path d="M11.7 5.4 L10.9 7.8" fill="none" stroke="#a873e8" stroke-width="3.4" stroke-linecap="round"/><path d="M5.2 8.2 L6.1 5.6 Q6.3 5.1 6.9 5.1 H8.6 L7.8 7.6 Q7.6 8.4 6.8 8.4 Z" fill="#fff" opacity=".0"/></svg>
<svg class="b" style="left:1156.8px;top:114.2px;" width="7" height="5" viewBox="0 0 7 5"><path d="M1.1 1.2 L3.5 3.6 L5.9 1.2" fill="none" stroke="#3a3a3a" stroke-width="0.85" stroke-linecap="round" stroke-linejoin="round" /></svg>
<svg class="b" style="left:112.2px;top:89.4px;" width="13" height="11" viewBox="0 0 13 11"><path d="M0.8 4.6 Q0.8 0.6 6.5 0.6 Q12.2 0.6 12.2 4.6 V8.6 Q12.2 10.2 10.6 10.2 H2.4 Q0.8 10.2 0.8 8.6 Z" fill="#1b55a8"/><ellipse cx="6.5" cy="4.3" rx="4.5" ry="2.5" fill="#e6f3fb"/><path d="M0.8 5 L6.5 7.6 L3.8 10.2 H2.4 Q0.8 10.2 0.8 8.6 Z" fill="#3f86d6"/><path d="M12.2 5 L6.5 7.6 L3.8 10.2 H10.6 Q12.2 10.2 12.2 8.6 Z" fill="#6fb2c9"/><path d="M0.8 4.6 Q0.8 0.6 6.5 0.6 Q12.2 0.6 12.2 4.6" fill="none" stroke="#174a97" stroke-width="0.9"/></svg>
<svg class="b" style="left:113.6px;top:118.1px;" width="11" height="11" viewBox="0 0 11 11"><rect x="0.5" y="0.6" width="10" height="9.8" rx="1.4" fill="#2f7bd6"/><path d="M0.5 3.2 V2 Q0.5 0.6 1.9 0.6 H9.1 Q10.5 0.6 10.5 2 V3.2 Z" fill="#1c5cb4"/><g fill="#dbe9fb"><circle cx="3.1" cy="5" r="0.7"/><circle cx="5.5" cy="5" r="0.7"/><circle cx="7.9" cy="5" r="0.7"/><circle cx="3.1" cy="7.6" r="0.7"/><circle cx="5.5" cy="7.6" r="0.7"/></g></svg>
<svg class="b" style="left:113.35px;top:146.85px;" width="11.5" height="11.5" viewBox="0 0 14 14"><path d="M2.3 8.6 L3.9 3.9 Q4.3 2.7 5.6 2.7 H10" fill="none" stroke="#3b7fe0" stroke-width="3.4" stroke-linejoin="round" stroke-linecap="round"/><path d="M7.4 2.7 H9.6 Q10.4 2.7 10.7 3.6" fill="none" stroke="#1a3a9a" stroke-width="3.4" stroke-linecap="round"/><path d="M2.3 8.6 L3.1 6.2" fill="none" stroke="#86b84a" stroke-width="3.4" stroke-linecap="round"/><path d="M11.7 5.4 L10.1 10.1 Q9.7 11.3 8.4 11.3 H4" fill="none" stroke="#df5a74" stroke-width="3.4" stroke-linejoin="round" stroke-linecap="round"/><path d="M11.7 5.4 L10.9 7.8" fill="none" stroke="#a873e8" stroke-width="3.4" stroke-linecap="round"/><path d="M5.2 8.2 L6.1 5.6 Q6.3 5.1 6.9 5.1 H8.6 L7.8 7.6 Q7.6 8.4 6.8 8.4 Z" fill="#fff" opacity=".0"/></svg>
<svg class="b" style="left:112.5px;top:176.0px;" width="13" height="11" viewBox="0 0 13 11"><circle cx="4.4" cy="2.6" r="2" fill="#5aa2ea"/><circle cx="9.2" cy="3.2" r="1.5" fill="#1c5cb4"/><rect x="6.6" y="5.6" width="5.6" height="3.6" rx="1.4" fill="#1c5cb4"/><rect x="0.8" y="5.6" width="7.6" height="4.6" rx="1.6" fill="#3c88e0"/></svg>
<svg class="b" style="left:112.6px;top:204.4px;" width="13" height="10" viewBox="0 0 13 10"><path d="M1 4.8 L3.2 2.6 L5.6 5 L3.4 7.2 Z" fill="#1b4fa0"/><path d="M3.4 7.2 L10 0.8 L12.2 3 L5.6 9.4 Z" fill="#3f8ce6"/><path d="M3.4 7.2 L5.6 5 L7.8 7.2 L5.6 9.4 Z" fill="#2a6bc8"/></svg>
<svg class="b" style="left:113.5px;top:232.4px;" width="11" height="12" viewBox="0 0 11 12"><path d="M5.5 3.6 V6.2 M2.6 8.6 V6.2 H8.4 V8.6" fill="none" stroke="#1c5cb4" stroke-width="0.9"/><circle cx="5.5" cy="2.4" r="1.7" fill="#5aa2ea" stroke="#2f7bd6" stroke-width="0.5"/><circle cx="2.6" cy="9.4" r="1.9" fill="#1c5cb4"/><circle cx="8.4" cy="9.4" r="1.9" fill="#1c5cb4"/></svg>
<svg class="b" style="left:112.6px;top:262.7px;" width="13" height="9" viewBox="0 0 13 9"><path d="M3.6 8.4 Q0.8 8.4 0.8 6.2 Q0.8 4.4 2.8 4 Q3.4 1.2 6.2 1 Q8.6 0.9 9.6 3.2 Q12.3 3.6 12.3 6 Q12.3 8.4 9.8 8.4 Z" fill="#2f7bd6"/><path d="M2.8 4 Q3.4 1.2 6.2 1 Q8.6 0.9 9.6 3.2 L5.6 5.6 Z" fill="#1c5cb4"/></svg>
<svg class="b" style="left:112.6px;top:287.7px;" width="13" height="12" viewBox="0 0 13 12"><rect x="0.9" y="0.9" width="11.2" height="10.2" rx="2" fill="none" stroke="#3a3a3a" stroke-width="0.95" stroke-linecap="round" stroke-linejoin="round" /><rect x="2.8" y="2.9" width="3" height="2.4" rx="0.8" fill="none" stroke="#3a3a3a" stroke-width="0.8" stroke-linecap="round" stroke-linejoin="round" /><rect x="7.2" y="2.9" width="3" height="2.4" rx="0.8" fill="none" stroke="#3a3a3a" stroke-width="0.8" stroke-linecap="round" stroke-linejoin="round" /><rect x="2.8" y="6.7" width="3" height="2.4" rx="0.8" fill="none" stroke="#3a3a3a" stroke-width="0.8" stroke-linecap="round" stroke-linejoin="round" /><rect x="7.2" y="6.7" width="3" height="2.4" rx="0.8" fill="none" stroke="#3a3a3a" stroke-width="0.8" stroke-linecap="round" stroke-linejoin="round" /></svg>
<svg class="b" style="left:144.55px;top:146.69px;" width="6.5" height="4.2250000000000005" viewBox="0 0 6.5 4.2250000000000005"><path d="M0.78 0.91 L3.25 3.25 L5.72 0.91" fill="none" stroke="#6a6a6a" stroke-width="0.8" stroke-linecap="round" stroke-linejoin="round" /></svg>
<svg class="b" style="left:144.55px;top:243.49px;" width="6.5" height="4.2250000000000005" viewBox="0 0 6.5 4.2250000000000005"><path d="M0.78 0.91 L3.25 3.25 L5.72 0.91" fill="none" stroke="#6a6a6a" stroke-width="0.8" stroke-linecap="round" stroke-linejoin="round" /></svg>
<svg class="b" style="left:157.0px;top:166.5px;" width="11" height="10" viewBox="0 0 11 10"><rect x="1.3" y="1.1" width="8.4" height="7.8" rx="1.4" fill="#d6dde8" stroke="#262626" stroke-width="0.9"/><path d="M1.3 5 H3.7 Q4 6.5 5.5 6.5 Q7 6.5 7.3 5 H9.7 V7.5 Q9.7 8.9 8.3 8.9 H2.7 Q1.3 8.9 1.3 7.5 Z" fill="#262626"/></svg>
<svg class="b" style="left:157.2px;top:188.8px;" width="11" height="10" viewBox="0 0 11 10"><path d="M1.2 1 L10 5 L1.2 9 L2.4 5 Z M2.4 5 H6" fill="none" stroke="#3c3c3c" stroke-width="0.85" stroke-linecap="round" stroke-linejoin="round" /></svg>
<svg class="b" style="left:156.5px;top:210.6px;" width="12" height="11" viewBox="0 0 12 11"><path d="M3.2 9.6 L3.8 7.4 L9.2 1.6 Q9.9 1 10.6 1.6 Q11.2 2.3 10.6 3 L5.2 8.8 Z" fill="none" stroke="#3c3c3c" stroke-width="0.85" stroke-linecap="round" stroke-linejoin="round" /><path d="M1 2 H7 M1 4.4 H5 M1 6.8 H2.8" fill="none" stroke="#3c3c3c" stroke-width="0.8" stroke-linecap="round" stroke-linejoin="round" /></svg>
<svg class="b" style="left:157.0px;top:263.2px;" width="11" height="10" viewBox="0 0 11 10"><rect x="1" y="0.9" width="9" height="8.2" rx="1.6" fill="none" stroke="#3c3c3c" stroke-width="0.9" stroke-linecap="round" stroke-linejoin="round" /><path d="M1.2 5.2 H3.6 Q3.9 6.6 5.5 6.6 Q7.1 6.6 7.4 5.2 H9.8" fill="none" stroke="#3c3c3c" stroke-width="0.85" stroke-linecap="round" stroke-linejoin="round" /></svg>
<svg class="b" style="left:156.5px;top:285.1px;" width="12" height="11" viewBox="0 0 12 11"><path d="M3.2 9.6 L3.8 7.4 L9.2 1.6 Q9.9 1 10.6 1.6 Q11.2 2.3 10.6 3 L5.2 8.8 Z" fill="none" stroke="#3c3c3c" stroke-width="0.85" stroke-linecap="round" stroke-linejoin="round" /><path d="M1 2 H7 M1 4.4 H5 M1 6.8 H2.8" fill="none" stroke="#3c3c3c" stroke-width="0.8" stroke-linecap="round" stroke-linejoin="round" /></svg>
<svg class="b" style="left:157.0px;top:308.0px;" width="11" height="10" viewBox="0 0 11 10"><path d="M1.2 1 L10 5 L1.2 9 L2.4 5 Z M2.4 5 H6" fill="none" stroke="#3c3c3c" stroke-width="0.85" stroke-linecap="round" stroke-linejoin="round" /></svg>
<svg class="b" style="left:157.5px;top:329.9px;" width="10" height="11" viewBox="0 0 10 11"><path d="M1.4 2.9 H8.6 M3.8 2.7 Q3.8 1 5 1 Q6.2 1 6.2 2.7" fill="none" stroke="#3c3c3c" stroke-width="0.8" stroke-linecap="round" stroke-linejoin="round" /><path d="M2.2 3.1 L2.7 9 Q2.8 10 3.8 10 H6.2 Q7.2 10 7.3 9 L7.8 3.1" fill="none" stroke="#3c3c3c" stroke-width="0.8" stroke-linecap="round" stroke-linejoin="round" /><path d="M4.2 4.8 V8 M5.8 4.8 V8" fill="none" stroke="#3c3c3c" stroke-width="0.75" stroke-linecap="round" stroke-linejoin="round" /></svg>
<svg class="b" style="left:156.5px;top:352.3px;" width="12" height="11" viewBox="0 0 12 11"><path d="M6 9 H2.4 Q1 9 1 7.6 V2.6 Q1 1.2 2.4 1.2 H3.6 Q4.6 1.2 4.6 2.2 V3 H8.6 Q10 3 10 4.4 V5" fill="none" stroke="#3c3c3c" stroke-width="0.85" stroke-linecap="round" stroke-linejoin="round" /><circle cx="8.8" cy="8" r="2.3" fill="none" stroke="#3c3c3c" stroke-width="0.85" stroke-linecap="round" stroke-linejoin="round" /><path d="M7.2 9.6 L10.4 6.4" fill="none" stroke="#3c3c3c" stroke-width="0.8" stroke-linecap="round" stroke-linejoin="round" /></svg>
<svg class="b" style="left:157.0px;top:374.7px;" width="11" height="11" viewBox="0 0 11 11"><path d="M6.6 9.8 H2.6 Q1.2 9.8 1.2 8.4 V2.6 Q1.2 1.2 2.6 1.2 H8.4 Q9.8 1.2 9.8 2.6 V6.6 Z M9.8 6.6 H7.8 Q6.6 6.6 6.6 7.8 V9.8" fill="none" stroke="#3c3c3c" stroke-width="0.85" stroke-linecap="round" stroke-linejoin="round" /></svg>
<svg class="b" style="left:157.0px;top:397.6px;" width="11" height="10" viewBox="0 0 11 10"><rect x="0.9" y="0.9" width="9.2" height="2.4" rx="0.7" fill="none" stroke="#3c3c3c" stroke-width="0.85" stroke-linecap="round" stroke-linejoin="round" /><path d="M1.6 3.4 V7.8 Q1.6 9.1 2.9 9.1 H8.1 Q9.4 9.1 9.4 7.8 V3.4" fill="none" stroke="#3c3c3c" stroke-width="0.85" stroke-linecap="round" stroke-linejoin="round" /></svg>
<svg class="b" style="left:156.5px;top:420.0px;" width="12" height="10" viewBox="0 0 12 10"><path d="M1 3.4 V2.2 Q1 1 2.2 1 H3.8 L5 2.4 H9.6 Q11 2.4 11 3.8 V7.6 Q11 9 9.6 9 H2.4 Q1 9 1 7.6 Z" fill="none" stroke="#5a5a5a" stroke-width="0.8" stroke-linecap="round" stroke-linejoin="round" /></svg>
<svg class="b" style="left:156.5px;top:441.9px;" width="12" height="11" viewBox="0 0 12 11"><path d="M5.4 9 H2.4 Q1 9 1 7.6 V2.2 Q1 1 2.2 1 H4 L5.2 2.4 H9.2 Q10.4 2.4 10.4 3.6 V4.2" fill="none" stroke="#3c3c3c" stroke-width="0.85" stroke-linecap="round" stroke-linejoin="round" /><circle cx="8" cy="7" r="2" fill="none" stroke="#3c3c3c" stroke-width="0.85" stroke-linecap="round" stroke-linejoin="round" /><path d="M9.5 8.5 L11 10" fill="none" stroke="#3c3c3c" stroke-width="0.9" stroke-linecap="round" stroke-linejoin="round" /></svg>
<svg class="b" style="left:156.1px;top:471.7px;" width="13" height="11" viewBox="0 0 13 11"><circle cx="6.5" cy="2" r="1.3" fill="none" stroke="#2a5a9a" stroke-width="0.8" stroke-linecap="round" stroke-linejoin="round" /><path d="M4.6 9.8 V5.6 Q4.6 4.6 5.6 4.6 H7.4 Q8.4 4.6 8.4 5.6 V9.8" fill="none" stroke="#2a5a9a" stroke-width="0.8" stroke-linecap="round" stroke-linejoin="round" /><circle cx="2.4" cy="3" r="1.1" fill="none" stroke="#2a5a9a" stroke-width="0.8" stroke-linecap="round" stroke-linejoin="round" /><path d="M3 9.4 Q1 9.6 1 7.6 V6.2 Q1 5.4 1.8 5.4 H2.8" fill="none" stroke="#2a5a9a" stroke-width="0.8" stroke-linecap="round" stroke-linejoin="round" /><circle cx="10.6" cy="3" r="1.1" fill="none" stroke="#2a5a9a" stroke-width="0.8" stroke-linecap="round" stroke-linejoin="round" /><path d="M10 9.4 Q12 9.6 12 7.6 V6.2 Q12 5.4 11.2 5.4 H10.2" fill="none" stroke="#2a5a9a" stroke-width="0.8" stroke-linecap="round" stroke-linejoin="round" /></svg>
<svg class="b" style="left:295.0px;top:170.92px;" width="7" height="4.55" viewBox="0 0 7 4.55"><path d="M0.84 0.98 L3.50 3.50 L6.16 0.98" fill="none" stroke="#555" stroke-width="0.8" stroke-linecap="round" stroke-linejoin="round" /></svg>
<svg class="b" style="left:424.1px;top:141.8px;" width="11" height="11" viewBox="0 0 11 11"><rect x="1.4" y="1.4" width="7.6" height="7.2" rx="1.9" fill="none" stroke="#1e1e1e" stroke-width="0.95" stroke-linecap="round" stroke-linejoin="round" /><path d="M9.7 3.2 V7.4 Q9.7 9.4 7.7 9.4 H3.4" fill="none" stroke="#1e1e1e" stroke-width="1.0" stroke-linecap="round" stroke-linejoin="round" /></svg>
<svg class="b" style="left:444.0px;top:143.0px;" width="11" height="8" viewBox="0 0 11 8"><path d="M1 1.4 H10" fill="none" stroke="#262626" stroke-width="0.9" stroke-linecap="round" stroke-linejoin="round" /><path d="M2.6 4.2 H8.4" fill="none" stroke="#8a8a8a" stroke-width="0.8" stroke-linecap="round" stroke-linejoin="round" /><path d="M4.2 6.6 H6.8" fill="none" stroke="#262626" stroke-width="0.9" stroke-linecap="round" stroke-linejoin="round" /></svg>
<svg class="b" style="left:461.0px;top:143.1px;" width="16" height="10" viewBox="0 0 16 10"><path d="M5.4 9.2 V1 M2.6 3.8 L5.4 1 L8.2 3.8" fill="none" stroke="#222" stroke-width="0.95" stroke-linecap="round" stroke-linejoin="round" /><path d="M11.2 0.8 V9 M8.9 6.8 L11.2 9.1 L13.5 6.8" fill="none" stroke="#555" stroke-width="0.7" stroke-linecap="round" stroke-linejoin="round" /></svg>
<svg class="b" style="left:784px;top:332px;" width="100" height="100" viewBox="0 0 100 100"><defs>
<linearGradient id="eb" x1="0" x2="0" y1="0" y2="1"><stop offset="0" stop-color="#8a62df"/><stop offset=".35" stop-color="#7d6ee2"/><stop offset=".62" stop-color="#3a7fda"/><stop offset="1" stop-color="#63adf0"/></linearGradient>
<linearGradient id="el" x1="0" x2="1" y1="0" y2="0"><stop offset="0" stop-color="#7cc0f3"/><stop offset="1" stop-color="#2f7ad4"/></linearGradient>
<linearGradient id="er" x1="0" x2="1" y1="0" y2="1"><stop offset="0" stop-color="#2a66c8"/><stop offset="1" stop-color="#62aeee"/></linearGradient>
<linearGradient id="ef" x1="0" x2="0" y1="0" y2="1"><stop offset="0" stop-color="#eeeeee"/><stop offset=".85" stop-color="#e2e2e2"/><stop offset="1" stop-color="#cdcdcd"/></linearGradient>
<linearGradient id="ep" x1="0" x2="1" y1="0" y2="0"><stop offset="0" stop-color="#e9e9e9"/><stop offset="1" stop-color="#e0e0e0"/></linearGradient>
</defs>
<path d="M8 48 L47.2 8.2 Q50 5.4 52.8 8.2 L92 48 V60 H8 Z" fill="url(#eb)"/>
<path d="M8 48 L20.2 35.6 V60 H8 Z" fill="url(#el)"/>
<path d="M92 48 L79.8 35.6 V60 H92 Z" fill="url(#er)"/>
<path d="M41 19 L48.2 13.2 Q50 11.8 51.8 13.2 L59 19 V22 H41 Z" fill="#c0aef2"/>
<rect x="20.2" y="18.8" width="59.8" height="70" rx="3.2" fill="url(#ep)"/>
<path d="M8 48 L50 78 L92 48 V90 Q92 94.4 87.6 94.4 H12.4 Q8 94.4 8 90 Z" fill="url(#ef)"/>
<path d="M8 48 L47.5 76 L32 91 H12 Q8 91 8 88 Z" fill="#ebebeb"/>
<path d="M92 48 L33 91.6 L30.5 94.4 H87.6 Q92 94.4 92 90 Z" fill="#e4e4e4"/>
<path d="M8 48.4 L47.4 76" stroke="#ffffff" stroke-width="1.3" fill="none" stroke-linecap="round"/>
<path d="M92 48.4 L33.4 91.4" stroke="#ffffff" stroke-width="1.6" fill="none" stroke-linecap="round"/>
<path d="M9.5 93.4 H90.5" stroke="#c9c9c9" stroke-width="1.6" fill="none" stroke-linecap="round" opacity=".8"/>
</svg>
</div></div>
<svg class="b" style="left:627.1px;top:514.8px;" width="10" height="13" viewBox="0 0 10 13"><path d="M2 2 L2 8.4 L3.5 7.1 L4.8 10 L6 9.5 L4.8 6.8 L7 6.8 Z" fill="#000" stroke="#fff" stroke-width="0.9" stroke-linejoin="round" paint-order="stroke"/></svg>
</body></html>
